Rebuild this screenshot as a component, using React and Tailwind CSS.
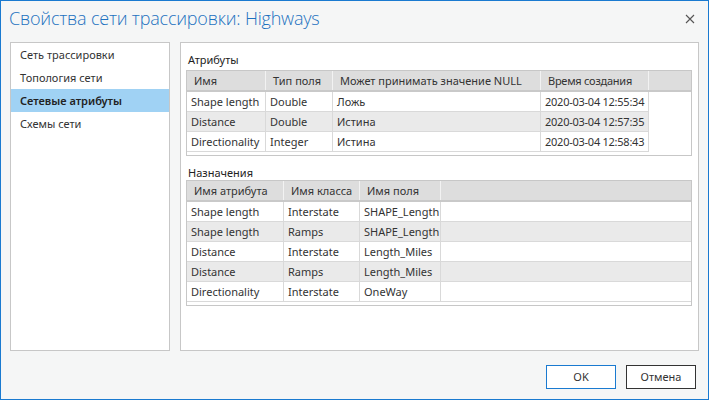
const navItems = ["Сеть трассировки", "Топология сети", "Сетевые атрибуты", "Схемы сети"];

const attrCols = [
  { title: "Имя", w: "w-[79px]" },
  { title: "Тип поля", w: "w-[67px]" },
  { title: "Может принимать значение NULL", w: "w-[208px]" },
  { title: "Время создания", w: "w-[108px] tracking-[-0.25px]" },
];

const attrRows = [
  ["Shape length", "Double", "Ложь", "2020-03-04 12:55:34"],
  ["Distance", "Double", "Истина", "2020-03-04 12:57:35"],
  ["Directionality", "Integer", "Истина", "2020-03-04 12:58:43"],
];

const assignCols = [
  { title: "Имя атрибута", w: "w-[97px]" },
  { title: "Имя класса", w: "w-[76px]" },
  { title: "Имя поля", w: "w-[81px]" },
];

const assignRows = [
  ["Shape length", "Interstate", "SHAPE_Length"],
  ["Shape length", "Ramps", "SHAPE_Length"],
  ["Distance", "Interstate", "Length_Miles"],
  ["Distance", "Ramps", "Length_Miles"],
  ["Directionality", "Interstate", "OneWay"],
];

function HeaderRow({ cols }) {
  return (
    <div className="flex h-[21px] bg-[#dddddd] border-b-2 border-[#c9c9c9]">
      {cols.map((c) => (
        <div
          key={c.title}
          className={`${c.w} shrink-0 border-r border-[#f2f2f2] pl-[7px] leading-[19px] whitespace-nowrap overflow-hidden`}
        >
          {c.title}
        </div>
      ))}
      <div className="flex-1" />
    </div>
  );
}

export default function App() {
  return (
    <div
      className="w-[709px] h-[400px] bg-[#f5f6f6] border border-[#1a7ad0] flex flex-col text-[11px] text-[#333333]"
      style={{ fontFamily: '"Noto Sans", "Open Sans", sans-serif' }}
    >
      {/* Title bar */}
      <div className="h-[41px] flex items-center justify-between pl-[8px] pr-[13px] pb-[7px]">
        <div className="text-[18px] text-[#1d72c0] tracking-[-0.2px]" style={{ fontFamily: '"Open Sans", "Noto Sans", sans-serif', fontWeight: 300 }}>
          Свойства сети трассировки: Highways
        </div>
        <svg width="10" height="10" viewBox="0 0 10 10" className="mt-[1px]">
          <path d="M1 1 L9 9 M9 1 L1 9" stroke="#555555" strokeWidth="1.1" />
        </svg>
      </div>

      {/* Body */}
      <div className="flex gap-[10px] pl-[9px] pr-[9px] h-[309px]">
        {/* Left nav */}
        <div className="w-[160px] shrink-0 bg-white border border-[#c7c7c7]">
          {navItems.map((item, i) => (
            <div
              key={item}
              className={`h-[23px] leading-[23px] pl-[9px] ${i === 2 ? "bg-[#a0d2f4] font-semibold text-[#222222]" : ""}`}
            >
              {item}
            </div>
          ))}
        </div>

        {/* Right content */}
        <div className="flex-1 bg-white border border-[#c7c7c7] pl-[5px] pr-[6px] pt-[10px]">
          <div className="h-[14px] leading-[14px] pl-[2px] text-[#222222]">Атрибуты</div>
          <div className="mt-[3px] h-[86px] border border-[#c7c7c7] bg-white">
            <HeaderRow cols={attrCols} />
            {attrRows.map((row, r) => (
              <div key={r} className="flex h-[20px]">
                {row.map((cell, c) => (
                  <div
                    key={c}
                    className={`${attrCols[c].w} shrink-0 border-r border-b border-[#d9d9d9] pl-[4px] leading-[19px] whitespace-nowrap overflow-hidden ${r === 1 ? "bg-[#eaeaea]" : "bg-white"}`}
                  >
                    {cell}
                  </div>
                ))}
              </div>
            ))}
          </div>

          <div className="mt-[10px] h-[14px] leading-[14px] pl-[2px] text-[#222222]">Назначения</div>
          <div className="h-[126px] border border-[#c7c7c7] bg-white">
            <HeaderRow cols={assignCols} />
            {assignRows.map((row, r) => (
              <div key={r} className={`flex h-[20px] border-b border-[#d9d9d9] ${r % 2 === 1 ? "bg-[#eaeaea]" : "bg-white"}`}>
                {row.map((cell, c) => (
                  <div
                    key={c}
                    className={`${assignCols[c].w} shrink-0 border-r border-[#d9d9d9] pl-[4px] leading-[19px] whitespace-nowrap overflow-hidden`}
                  >
                    {cell}
                  </div>
                ))}
                <div className="flex-1" />
              </div>
            ))}
          </div>
        </div>
      </div>

      {/* Footer buttons */}
      <div className="flex justify-end gap-[10px] pr-[12px] pt-[14px]">
        <button className="w-[70px] h-[24px] border border-[#1a7ad0] bg-white text-[#333333]">OK</button>
        <button className="w-[70px] h-[24px] border border-[#333333] bg-white text-[#333333]">Отмена</button>
      </div>
    </div>
  );
}
